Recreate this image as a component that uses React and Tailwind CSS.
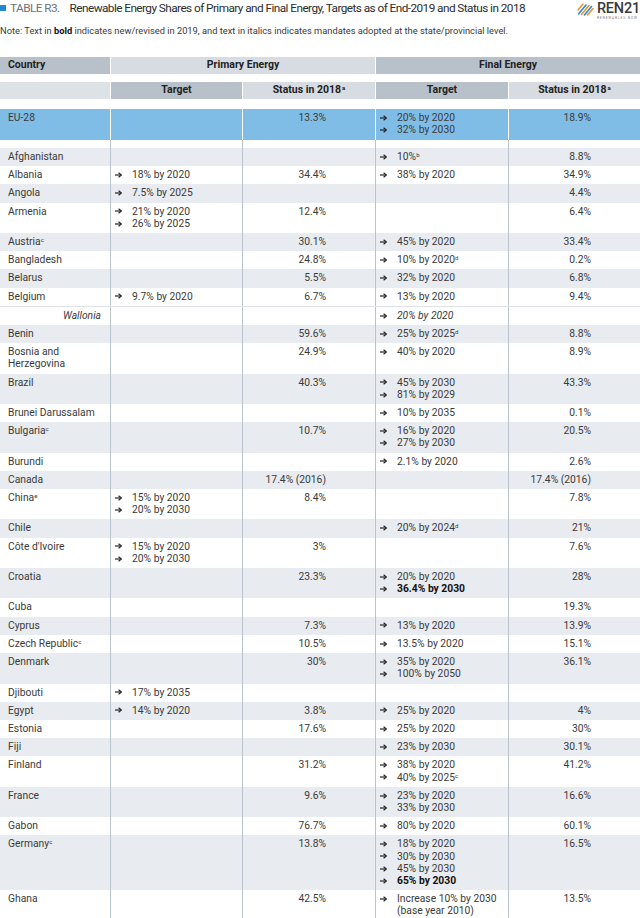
import React from 'react';

// column widths: country | primary target | primary status | final target | final status
const COLS = 'grid grid-cols-[110px_132px_133px_133px_132px]';

const rows = [
  { c: 'Afghanistan', ft: ['10%^b'], fs: '8.8%' },
  { c: 'Albania', pt: ['18% by 2020'], ps: '34.4%', ft: ['38% by 2020'], fs: '34.9%' },
  { c: 'Angola', pt: ['7.5% by 2025'], fs: '4.4%' },
  { c: 'Armenia', pt: ['21% by 2020', '26% by 2025'], ps: '12.4%', fs: '6.4%' },
  { c: 'Austria^c', ps: '30.1%', ft: ['45% by 2020'], fs: '33.4%' },
  { c: 'Bangladesh', ps: '24.8%', ft: ['10% by 2020^d'], fs: '0.2%' },
  { c: 'Belarus', ps: '5.5%', ft: ['32% by 2020'], fs: '6.8%' },
  { c: 'Belgium', pt: ['9.7% by 2020'], ps: '6.7%', ft: ['13% by 2020'], fs: '9.4%' },
  { c: 'Wallonia', sub: true, ft: ['20% by 2020'] },
  { c: 'Benin', ps: '59.6%', ft: ['25% by 2025^d'], fs: '8.8%' },
  { c: 'Bosnia and\nHerzegovina', ps: '24.9%', ft: ['40% by 2020'], fs: '8.9%' },
  { c: 'Brazil', ps: '40.3%', ft: ['45% by 2030', '81% by 2029'], fs: '43.3%' },
  { c: 'Brunei Darussalam', ft: ['10% by 2035'], fs: '0.1%' },
  { c: 'Bulgaria^c', ps: '10.7%', ft: ['16% by 2020', '27% by 2030'], fs: '20.5%' },
  { c: 'Burundi', ft: ['2.1% by 2020'], fs: '2.6%' },
  { c: 'Canada', ps: '17.4% (2016)', fs: '17.4% (2016)' },
  { c: 'China^e', pt: ['15% by 2020', '20% by 2030'], ps: '8.4%', fs: '7.8%' },
  { c: 'Chile', ft: ['20% by 2024^d'], fs: '21%' },
  { c: "Côte d'Ivoire", pt: ['15% by 2020', '20% by 2030'], ps: '3%', fs: '7.6%' },
  { c: 'Croatia', ps: '23.3%', ft: ['20% by 2020', '*36.4% by 2030'], fs: '28%' },
  { c: 'Cuba', fs: '19.3%' },
  { c: 'Cyprus', ps: '7.3%', ft: ['13% by 2020'], fs: '13.9%' },
  { c: 'Czech Republic^c', ps: '10.5%', ft: ['13.5% by 2020'], fs: '15.1%' },
  { c: 'Denmark', ps: '30%', ft: ['35% by 2020', '100% by 2050'], fs: '36.1%' },
  { c: 'Djibouti', pt: ['17% by 2035'] },
  { c: 'Egypt', pt: ['14% by 2020'], ps: '3.8%', ft: ['25% by 2020'], fs: '4%' },
  { c: 'Estonia', ps: '17.6%', ft: ['25% by 2020'], fs: '30%' },
  { c: 'Fiji', ft: ['23% by 2030'], fs: '30.1%' },
  { c: 'Finland', ps: '31.2%', ft: ['38% by 2020', '40% by 2025^c'], fs: '41.2%' },
  { c: 'France', ps: '9.6%', ft: ['23% by 2020', '33% by 2030'], fs: '16.6%' },
  { c: 'Gabon', ps: '76.7%', ft: ['80% by 2020'], fs: '60.1%' },
  { c: 'Germany^c', ps: '13.8%', ft: ['18% by 2020', '30% by 2030', '45% by 2030', '*65% by 2030'], fs: '16.5%' },
  { c: 'Ghana', ps: '42.5%', ft: ['Increase 10% by 2030', '-(base year 2010)'], fs: '13.5%' },
];

// "text^x" -> text with superscript x
const Txt = ({ s }) => {
  const [t, sup] = s.split('^');
  return (
    <>
      {t}
      {sup && <sup className="text-[6px]">{sup}</sup>}
    </>
  );
};

const Arrow = () => (
  <svg width="7" height="6" viewBox="0 0 7 6" className="inline-block mr-[10px] -mt-px">
    <path d="M0 3h5.6" stroke="#222" strokeWidth="1.2" />
    <path d="M3.6 0.8L6.4 3 3.6 5.2" fill="none" stroke="#222" strokeWidth="1.2" />
  </svg>
);

const Targets = ({ lines = [], italic }) => (
  <div className={italic ? 'italic' : ''}>
    {lines.map((l, i) => {
      const bold = l.startsWith('*');
      const plain = l.startsWith('-');
      const s = bold || plain ? l.slice(1) : l;
      return (
        <div key={i} className={bold ? 'font-bold text-[#111]' : ''}>
          {plain ? <span className="inline-block w-[17px]" /> : <Arrow />}
          <Txt s={s} />
        </div>
      );
    })}
  </div>
);

const BodyRow = ({ r, shaded }) => {
  const bg = shaded ? 'bg-[#e8ebef]' : 'bg-white';
  const line = 'border-l border-[#b9c3cd]';
  return (
    <div className={`${COLS} ${bg} ${r.sub ? 'border-t border-[#dfe3e8]' : ''}`}>
      <div className={`py-[3px] whitespace-pre-line ${r.sub ? 'italic text-right pr-[9px]' : 'pl-2'}`}>
        <Txt s={r.c} />
      </div>
      <div className={`${line} py-[3px] pl-[4px]`}>
        <Targets lines={r.pt} />
      </div>
      <div className={`${line} py-[3px] text-right pr-[49px]`}>{r.ps}</div>
      <div className={`${line} py-[3px] pl-[4px]`}>
        <Targets lines={r.ft} italic={r.sub} />
      </div>
      <div className={`${line} py-[3px] text-right pr-[49px]`}>{r.fs}</div>
    </div>
  );
};

const Logo = () => (
  <div className="flex items-start gap-[3px] mt-[2px]">
    <svg width="17" height="14" viewBox="0 0 17 14">
      <path d="M1 8L6 2" stroke="#f0922e" strokeWidth="1.6" strokeLinecap="round" />
      <path d="M1.5 12L9 3" stroke="#2b8bd4" strokeWidth="1.6" strokeLinecap="round" />
      <path d="M4.5 12.5L12 3.5" stroke="#f0922e" strokeWidth="1.6" strokeLinecap="round" />
      <path d="M7.5 13L14.5 4.5" stroke="#2b8bd4" strokeWidth="1.6" strokeLinecap="round" />
      <path d="M10.5 13L16 6.5" stroke="#f0922e" strokeWidth="1.6" strokeLinecap="round" />
    </svg>
    <div className="flex flex-col">
      <span className="text-[14.5px] leading-[14px] font-medium text-[#3a3a3a] tracking-[-0.2px]">REN21</span>
      <span className="text-[3.2px] leading-[4px] tracking-[0.9px] text-[#777] whitespace-nowrap">RENEWABLES NOW</span>
    </div>
  </div>
);

export default function App() {
  let shade = false;
  return (
    <div className="w-[640px] h-[918px] overflow-hidden bg-white font-['Roboto',sans-serif] text-[10.3px] leading-[12.2px] text-[#3a3a3a]">
      <div className="flex justify-between items-start h-[20px] pr-0">
        <div className="flex items-center mt-[1px] text-[11.8px] leading-[14px] tracking-[-0.56px] whitespace-nowrap">
          <span className="w-[6px] h-[6px] bg-[#1f8ad2] mr-[4px]" />
          <span className="text-[#6b737b]">TABLE R3.</span>
          <span className="ml-[10px] text-[#2d2d2d]">
            Renewable Energy Shares of Primary and Final Energy, Targets as of End-2019 and Status in 2018
          </span>
        </div>
        <Logo />
      </div>

      <p className="mt-[5px] text-[9.3px] leading-[11px] text-[#3a3a3a] whitespace-nowrap">
        Note: Text in <b className="text-[#111]">bold</b> indicates new/revised in 2019, and text in italics indicates mandates adopted at the state/provincial level.
      </p>

      {/* header */}
      <div className="mt-[21px] font-bold text-[10.5px] text-[#222]">
        <div className="grid grid-cols-[110px_265px_265px] h-[17px]">
          <div className="bg-[#b8c1ca] pl-2 flex items-center">Country</div>
          <div className="bg-[#d6dce2] border-l border-white flex items-center justify-center">Primary Energy</div>
          <div className="bg-[#b8c1ca] border-l border-white flex items-center justify-center">Final Energy</div>
        </div>
        <div className={`${COLS} h-[17px] mt-[8px]`}>
          <div className="bg-[#dde2e7]" />
          <div className="bg-[#b8c1ca] border-l border-white flex items-center justify-center">Target</div>
          <div className="bg-[#d6dce2] border-l border-white flex items-center justify-center">
            Status in 2018<sup className="text-[6px] ml-px">a</sup>
          </div>
          <div className="bg-[#b8c1ca] border-l border-white flex items-center justify-center">Target</div>
          <div className="bg-[#d6dce2] border-l border-white flex items-center justify-center">
            Status in 2018<sup className="text-[6px] ml-px">a</sup>
          </div>
        </div>
      </div>

      {/* EU-28 */}
      <div className={`${COLS} mt-[10px] bg-[#80bde6] h-[31px]`}>
        <div className="pl-2 py-[3px]">EU-28</div>
        <div className="border-l border-white" />
        <div className="border-l border-white py-[3px] text-right pr-[49px]">13.3%</div>
        <div className="border-l border-white py-[3px] pl-[4px]">
          <Targets lines={['20% by 2020', '32% by 2030']} />
        </div>
        <div className="border-l border-white py-[3px] text-right pr-[49px]">18.9%</div>
      </div>

      <div className={`${COLS} h-[8px]`}>
        <div />
        <div className="border-l border-[#b9c3cd]" />
        <div className="border-l border-[#b9c3cd]" />
        <div className="border-l border-[#b9c3cd]" />
        <div className="border-l border-[#b9c3cd]" />
      </div>

      {rows.map((r) => {
        if (!r.sub) shade = !shade;
        return <BodyRow key={r.c} r={r} shaded={r.sub ? false : shade} />;
      })}
    </div>
  );
}
